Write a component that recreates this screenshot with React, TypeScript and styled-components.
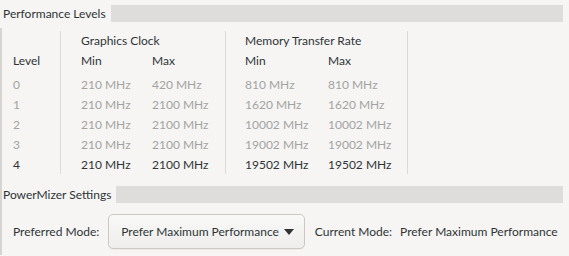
import React from "react";
import styled, { createGlobalStyle } from "styled-components";

const Global = createGlobalStyle`
  html, body {
    margin: 0;
    padding: 0;
    background: #f6f5f4;
  }
  body {
    font-family: Lato, "Noto Sans", sans-serif;
    font-size: 12px;
    color: #2e3436;
  }
`;

const Page = styled.div`
  width: 569px;
  height: 256px;
  background: #f6f5f4;
  overflow: hidden;
`;

const SectionHeader = styled.div<{ $top: number; $left: number }>`
  display: flex;
  align-items: center;
  height: 17px;
  margin: ${(p) => p.$top}px 6px 0 ${(p) => p.$left}px;
`;

const SectionTitle = styled.span`
  line-height: 17px;
  white-space: nowrap;
`;

const SectionBar = styled.div`
  flex: 1;
  align-self: stretch;
  margin-left: 5px;
  background: #dedddb;
`;

const Body = styled.div`
  margin-top: 6px;
  border-left: 2px solid #d6d4d0;
  padding-top: 3px;
  padding-bottom: 6px;
`;

const Table = styled.div`
  display: flex;
  height: 143px;
  margin-bottom: 12px;
`;

const Group = styled.div<{ $width: number; $pad: number; $cols: string }>`
  width: ${(p) => p.$width}px;
  padding-left: ${(p) => p.$pad}px;
  box-sizing: border-box;
  border-right: 1px solid #dcdad6;
  display: grid;
  grid-template-columns: ${(p) => p.$cols};
  grid-template-rows: 20px 24px repeat(5, 20px);
  align-content: start;
`;

const Title = styled.div`
  grid-column: 1 / -1;
  line-height: 20px;
  white-space: nowrap;
`;

const Cell = styled.div<{ $dim?: boolean }>`
  align-self: start;
  line-height: 20px;
  white-space: nowrap;
  color: ${(p) => (p.$dim ? "#a2a3a1" : "#2e3436")};
`;

const SettingsRow = styled.div`
  display: flex;
  align-items: center;
  margin-top: 11px;
  padding-left: 11px;
`;

const Label = styled.span`
  white-space: nowrap;
`;

const ModeButton = styled.button`
  display: flex;
  align-items: center;
  gap: 5px;
  height: 35px;
  margin-left: 9px;
  margin-right: 10px;
  padding: 0 10px 0 12px;
  border: 1px solid #cdc7c2;
  border-radius: 5px;
  background: linear-gradient(#f9f9f8, #eeedeb);
  font: inherit;
  color: #2e3436;
  white-space: nowrap;
  box-shadow: 0 1px 0 rgba(0, 0, 0, 0.04);
`;

const Value = styled.span`
  margin-left: 8px;
  white-space: nowrap;
`;

const Arrow = () => (
  <svg width="10" height="6" viewBox="0 0 10 6">
    <path d="M0 0 L10 0 L5 6 Z" fill="#2e3436" />
  </svg>
);

const levels = [
  { gMin: 210, gMax: 420, mMin: 810, mMax: 810 },
  { gMin: 210, gMax: 2100, mMin: 1620, mMax: 1620 },
  { gMin: 210, gMax: 2100, mMin: 10002, mMax: 10002 },
  { gMin: 210, gMax: 2100, mMin: 19002, mMax: 19002 },
  { gMin: 210, gMax: 2100, mMin: 19502, mMax: 19502 },
];
const current = 4;

export default function App() {
  return (
    <Page>
      <Global />
      <SectionHeader $top={5} $left={3}>
        <SectionTitle>Performance Levels</SectionTitle>
        <SectionBar />
      </SectionHeader>
      <Body>
        <Table>
          <Group $width={59} $pad={11} $cols="1fr">
            <Title />
            <Cell>Level</Cell>
            {levels.map((_, i) => (
              <Cell key={i} $dim={i !== current}>
                {i}
              </Cell>
            ))}
          </Group>
          <Group $width={165} $pad={20} $cols="71px 1fr">
            <Title>Graphics Clock</Title>
            <Cell>Min</Cell>
            <Cell>Max</Cell>
            {levels.map((l, i) => (
              <React.Fragment key={i}>
                <Cell $dim={i !== current}>{l.gMin} MHz</Cell>
                <Cell $dim={i !== current}>{l.gMax} MHz</Cell>
              </React.Fragment>
            ))}
          </Group>
          <Group $width={182} $pad={19} $cols="83px 1fr">
            <Title>Memory Transfer Rate</Title>
            <Cell>Min</Cell>
            <Cell>Max</Cell>
            {levels.map((l, i) => (
              <React.Fragment key={i}>
                <Cell $dim={i !== current}>{l.mMin} MHz</Cell>
                <Cell $dim={i !== current}>{l.mMax} MHz</Cell>
              </React.Fragment>
            ))}
          </Group>
        </Table>
        <SectionHeader $top={0} $left={1}>
          <SectionTitle>PowerMizer Settings</SectionTitle>
          <SectionBar />
        </SectionHeader>
        <SettingsRow>
          <Label>Preferred Mode:</Label>
          <ModeButton>
            Prefer Maximum Performance
            <Arrow />
          </ModeButton>
          <Label>Current Mode:</Label>
          <Value>Prefer Maximum Performance</Value>
        </SettingsRow>
      </Body>
    </Page>
  );
}
